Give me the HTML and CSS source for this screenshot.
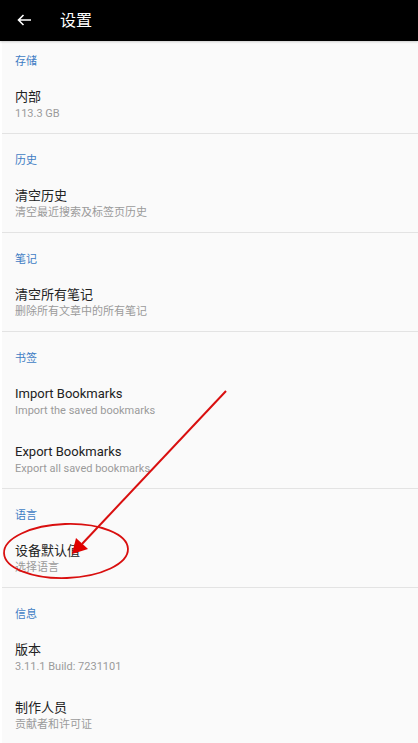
FILE: index.html
```html
<!DOCTYPE html>
<html lang="zh">
<head>
<meta charset="utf-8">
<title>设置</title>
<link rel="stylesheet" href="styles.css">
</head>
<body>
<header class="appbar">
  <svg class="back" width="16" height="16" viewBox="0 0 16 16" aria-hidden="true">
    <path d="M15 8H2.5M7.5 3L2.5 8l5 5" fill="none" stroke="#fff" stroke-width="1.6"/>
  </svg>
  <span class="appbar-title">设置</span>
</header>
<main class="list">
  <section class="section first">
    <div class="category">存储</div>
    <div class="item"><div class="title">内部</div><div class="summary">113.3 GB</div></div>
  </section>
  <section class="section">
    <div class="category">历史</div>
    <div class="item"><div class="title">清空历史</div><div class="summary">清空最近搜索及标签页历史</div></div>
  </section>
  <section class="section">
    <div class="category">笔记</div>
    <div class="item"><div class="title">清空所有笔记</div><div class="summary">删除所有文章中的所有笔记</div></div>
  </section>
  <section class="section">
    <div class="category">书签</div>
    <div class="item"><div class="title">Import Bookmarks</div><div class="summary">Import the saved bookmarks</div></div>
    <div class="item"><div class="title">Export Bookmarks</div><div class="summary">Export all saved bookmarks</div></div>
  </section>
  <section class="section">
    <div class="category">语言</div>
    <div class="item"><div class="title">设备默认值</div><div class="summary">选择语言</div></div>
  </section>
  <section class="section last">
    <div class="category">信息</div>
    <div class="item"><div class="title">版本</div><div class="summary">3.11.1 Build: 7231101</div></div>
    <div class="item"><div class="title">制作人员</div><div class="summary">贡献者和许可证</div></div>
  </section>
</main>
<svg class="annot" width="418" height="743" viewBox="0 0 418 743" aria-hidden="true">
  <ellipse cx="66" cy="551" rx="62" ry="27" fill="none" stroke="#d90f0f" stroke-width="1.8" transform="rotate(-2 66 551)"/>
  <line x1="226" y1="391" x2="82" y2="544" stroke="#d90f0f" stroke-width="2"/>
  <polygon points="72,554 76,538 88,549" fill="#e00000"/>
</svg>
</body>
</html>
```
FILE: styles.css
```css
html, body {
  margin: 0;
  padding: 0;
}
body {
  width: 418px;
  min-height: 743px;
  background: #fafafa;
  font-family: Roboto, "Noto Sans CJK SC", sans-serif;
  position: relative;
  overflow: hidden;
}
.appbar {
  height: 41px;
  background: #000;
  display: flex;
  align-items: center;
  box-shadow: 0 1px 2px rgba(0, 0, 0, 0.18);
  position: relative;
  z-index: 1;
}
.back {
  margin-left: 16px;
  margin-top: -2px;
}
.appbar-title {
  margin-left: 28px;
  color: #fff;
  font-size: 16px;
  margin-top: -3px;
}
.list {
  border-left: 2px solid #fff;
}
.section {
  border-bottom: 1px solid #e3e3e3;
}
.section.last {
  border-bottom: none;
}
.category {
  padding: 19px 0 5px 13px;
  line-height: 16px;
  font-size: 11px;
  color: #3f7dc4;
}
.section.first .category {
  padding-top: 13px;
}
.item {
  padding: 12px 0 12px 13px;
}
.title {
  font-size: 13px;
  line-height: 20px;
  color: #222;
}
.summary {
  font-size: 11px;
  line-height: 14px;
  color: #9a9a9a;
}
.annot {
  position: absolute;
  left: 0;
  top: 0;
  pointer-events: none;
  z-index: 2;
}
```
